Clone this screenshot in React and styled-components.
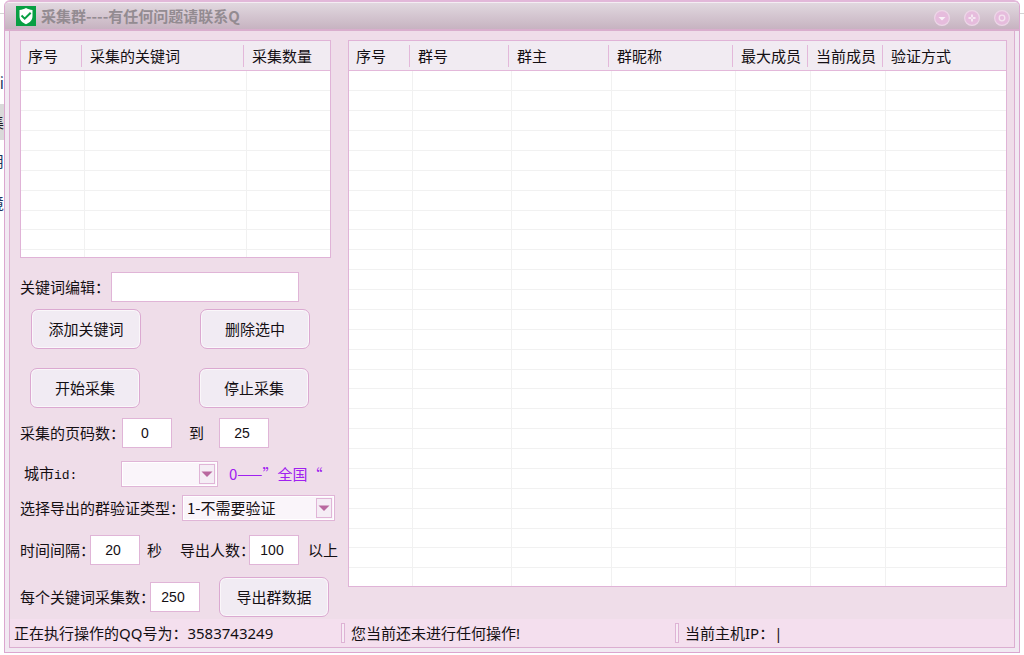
import React from 'react'
import styled, { createGlobalStyle } from 'styled-components'

const GlobalStyle = createGlobalStyle`
  * {
    box-sizing: border-box;
  }
  body {
    margin: 0;
    background: white;
    color: #140f13;
    font-family: "Noto Sans CJK SC", "Liberation Sans", sans-serif;
    font-size: 15px;
    line-height: 20px;
  }
  button, input, select {
    font-family: inherit;
    font-size: inherit;
    line-height: inherit;
    color: inherit;
    margin: 0;
  }
`;

const Page = styled.div`
  display: flex;
  align-items: flex-start;
  padding-right: 4px;
  background: linear-gradient(#d4d4d4, #d4d4d4) 0 13px / 100% 1px no-repeat;
`;

const Backdrop = styled.ul`
  width: 4px;
  margin: 0;
  padding: 62px 0 0;
  overflow: hidden;
  list-style: none;
`;
const BackdropItem = styled.li`
  display: flex;
  align-items: center;
  justify-content: flex-end;
  height: 42px;
  white-space: nowrap;
  color: #1b3560;
`;
const BackdropCurrent = styled(BackdropItem)`
  height: 36px;
  background: #d9d9d9;
  color: #1c161b;
`;

const Window = styled.main`
  flex: 1;
  min-width: 0;
  border: 1px solid #dba6cf;
  border-top: 2px solid #e2b8d9;
  border-radius: 6px 6px 0 0;
  background: #f1e9f2;
  overflow: hidden;
`;
const TitleBar = styled.header`
  display: flex;
  align-items: center;
  height: 29px;
  padding: 0 9px 0 11px;
  border-top: 1px solid #f4edf3;
  border-bottom: 2px solid #d9aecd;
  background: linear-gradient(#e1d8df, #c7b3c1);
`;
const Title = styled.h1`
  flex: 1;
  margin: 0 0 0 5px;
  font-size: 15px;
  font-weight: 700;
  color: #938b91;
`;
const TitleButtons = styled.div`
  display: flex;
  gap: 14px;
  padding-top: 4px;
`;
const TitleButton = styled.button`
  width: 16px;
  height: 16px;
  padding: 0;
  border: 0;
  background: none;

  svg {
    display: block;
  }
`;

const Frame = styled.div`
  margin: 0 4px 4px;
  border: 1px solid #dcaed1;
  border-top: 0;
  background: #efdde9;
`;
const Content = styled.div`
  display: flex;
  gap: 4px;
  padding: 9px 7px 2px 10px;
`;
const LeftColumn = styled.div`
  width: 324px;
  flex-shrink: 0;
`;
const RightColumn = styled.div`
  flex: 1;
  min-width: 0;
`;
const KeywordArea = styled.div`
  width: 311px;
`;

const ListBox = styled.div`
  height: ${props => props.$height};
  border: 1px solid #e0b3d7;
  background: white;
  overflow: hidden;
`;
const List = styled.table`
  width: 100%;
  table-layout: fixed;
  border-collapse: separate;
  border-spacing: 0;
`;
const HeadCell = styled.th`
  width: ${props => props.$width || 'auto'};
  height: 30px;
  padding: 0 0 0 5px;
  border-bottom: 1px solid #e3b8da;
  background: #f1ebf2 linear-gradient(#e3b8da, #e3b8da) right 3px center / 1px 22px no-repeat;
  font-weight: 400;
  text-align: left;
  white-space: nowrap;

  &:first-child {
    padding-left: 7px;
  }
  &:last-child {
    background-image: none;
  }
`;
const BodyRow = styled.tr`
  height: 20px;

  &:nth-child(8n) {
    height: 19px;
  }
`;
const BodyCell = styled.td`
  padding: 0;
  border-right: 1px solid #f1f1f1;
  border-bottom: 1px solid #f1f1f1;

  &:last-child {
    border-right: 0;
  }
`;

const FormRow = styled.div`
  display: flex;
  align-items: center;
  margin-top: ${props => props.$top || '10px'};
  white-space: nowrap;
`;
const ButtonRow = styled(FormRow)`
  gap: 59px;
  padding-left: ${props => props.$indent};
`;
const Label = styled.label`
  width: ${props => props.$width || 'auto'};
  margin-left: ${props => props.$left || '0'};
  flex-shrink: 0;
`;
const Mono = styled.span`
  font-family: "Liberation Mono", monospace;
  font-size: 13px;
`;
const Note = styled.span`
  margin-left: 11px;
  color: #a020f0;
`;
const TextInput = styled.input`
  width: 188px;
  height: 30px;
  padding: 0 6px;
  border: 1px solid #e0b5d7;
  border-radius: 0;
  background: white;
`;
const NumberInput = styled(TextInput)`
  width: 50px;
  padding: 0 4px 0 0;
  font-family: "Liberation Sans", sans-serif;
  font-size: 14px;
  text-align: center;
`;
const Button = styled.button`
  width: 110px;
  height: 40px;
  padding: 0;
  border: 1px solid #dba9d1;
  border-radius: 7px;
  background: #f1ebf3;
  box-shadow: inset 0 0 0 1px #faf7fa;
`;
const ExportButton = styled(Button)`
  margin-left: 19px;
`;

const SelectBox = styled.div`
  display: grid;
  width: ${props => props.$width};
  height: 26px;
  align-items: center;
`;
const SelectField = styled.select`
  grid-area: 1 / 1;
  width: 100%;
  height: 100%;
  padding: 0 20px 0 4px;
  border: 1px solid #e0b5d7;
  border-radius: 0;
  appearance: none;
  background: #faf5fa;
  box-shadow: inset 0 0 0 1px white;
`;
const SelectArrow = styled.span`
  grid-area: 1 / 1;
  justify-self: end;
  display: flex;
  align-items: center;
  justify-content: center;
  width: 16px;
  height: 20px;
  margin-right: 3px;
  border: 1px solid #e0b5d7;
  background: #f5edf5;
  pointer-events: none;
`;

const StatusBar = styled.footer`
  display: flex;
  align-items: center;
  height: 28px;
  background: #f4dfee;
  font-family: "Noto Sans", "Noto Sans CJK SC", sans-serif;
`;
const StatusText = styled.span`
  width: ${props => props.$width || 'auto'};
  padding-left: ${props => props.$left || '6px'};
  white-space: nowrap;
`;
const StatusDivider = styled.span`
  width: 4px;
  height: 20px;
  border: 1px solid #deb3d5;
  background: #f7ecf5;
`;

const keywordColumns = [
  { name: '序号', width: '64px' },
  { name: '采集的关键词', width: '162px' },
  { name: '采集数量' },
]

const groupColumns = [
  { name: '序号', width: '64px' },
  { name: '群号', width: '99px' },
  { name: '群主', width: '100px' },
  { name: '群昵称', width: '124px' },
  { name: '最大成员', width: '75px' },
  { name: '当前成员', width: '75px' },
  { name: '验证方式' },
]

const DataList = ({ columns, rows, height }) => (
  <ListBox $height={height}>
    <List>
      <thead>
        <tr>
          {columns.map(column => (
            <HeadCell key={column.name} $width={column.width}>{column.name}</HeadCell>
          ))}
        </tr>
      </thead>
      <tbody>
        {Array.from({ length: rows }, (_, row) => (
          <BodyRow key={row}>
            {columns.map(column => <BodyCell key={column.name} />)}
          </BodyRow>
        ))}
      </tbody>
    </List>
  </ListBox>
)

const Select = ({ id, width, children }) => (
  <SelectBox $width={width}>
    <SelectField id={id}>{children}</SelectField>
    <SelectArrow>
      <svg width="12" height="6" viewBox="0 0 12 6">
        <path d="M0.5 0.5h11L6 6z" fill="#b9689f" />
      </svg>
    </SelectArrow>
  </SelectBox>
)

const ShieldIcon = () => (
  <svg width="20" height="20" viewBox="0 0 20 20">
    <rect width="20" height="20" fill="#089f43" />
    <path d="M10 2c2 1.200 4 1.800 6.500 2v6c0 4-2.500 6.500-6.500 8.200C6 16.500 3.500 14 3.500 10V4C6 3.800 8 3.200 10 2z" fill="white" />
    <path d="M5.500 9.500l3.200 3.200 6-6" fill="none" stroke="#089f43" strokeWidth="2" />
  </svg>
)

const RoundIcon = ({ children }) => (
  <svg width="16" height="16" viewBox="0 0 16 16">
    <circle cx="8" cy="8" r="7.400" fill="#e6bcdd" stroke="#ecd6e7" strokeWidth="1.200" />
    {children}
  </svg>
)

const App = () => (
  <>
    <GlobalStyle />
    <Page>
      <Backdrop aria-hidden="true">
        <BackdropItem>i</BackdropItem>
        <BackdropCurrent>集</BackdropCurrent>
        <BackdropItem>用</BackdropItem>
        <BackdropItem>境</BackdropItem>
      </Backdrop>
      <Window>
        <TitleBar>
          <ShieldIcon />
          <Title>采集群----有任何问题请联系Q</Title>
          <TitleButtons>
            <TitleButton aria-label="最小化">
              <RoundIcon>
                <path d="M4.500 7h7L8 10.500z" fill="#f8eff6" />
              </RoundIcon>
            </TitleButton>
            <TitleButton aria-label="最大化">
              <RoundIcon>
                <path d="M8 4.500v7M4.500 8h7" stroke="#f4e6f1" strokeWidth="2" />
                <circle cx="8" cy="8" r="0.800" fill="#e0b3d7" />
              </RoundIcon>
            </TitleButton>
            <TitleButton aria-label="关闭">
              <RoundIcon>
                <circle cx="8" cy="8" r="2.800" fill="none" stroke="#f3e3ef" strokeWidth="1.300" />
              </RoundIcon>
            </TitleButton>
          </TitleButtons>
        </TitleBar>
        <Frame>
          <Content>
            <LeftColumn>
              <KeywordArea>
                <DataList columns={keywordColumns} rows={10} height="218px" />
              </KeywordArea>
              <FormRow $top="14px">
                <Label htmlFor="keyword" $width="91px">关键词编辑：</Label>
                <TextInput id="keyword" />
              </FormRow>
              <ButtonRow $top="7px" $indent="11px">
                <Button>添加关键词</Button>
                <Button>删除选中</Button>
              </ButtonRow>
              <ButtonRow $top="19px" $indent="10px">
                <Button>开始采集</Button>
                <Button>停止采集</Button>
              </ButtonRow>
              <FormRow>
                <Label htmlFor="page-from" $width="102px">采集的页码数：</Label>
                <NumberInput id="page-from" defaultValue="0" />
                <Label htmlFor="page-to" $width="30px" $left="17px">到</Label>
                <NumberInput id="page-to" defaultValue="25" />
              </FormRow>
              <FormRow $top="13px">
                <Label htmlFor="city" $width="97px" $left="4px">城市<Mono>id:</Mono></Label>
                <Select id="city" width="97px">
                  <option></option>
                </Select>
                <Note>0——”全国“</Note>
              </FormRow>
              <FormRow $top="8px">
                <Label htmlFor="verify" $width="162px">选择导出的群验证类型：</Label>
                <Select id="verify" width="153px">
                  <option>1-不需要验证</option>
                </Select>
              </FormRow>
              <FormRow $top="14px">
                <Label htmlFor="interval" $width="70px">时间间隔：</Label>
                <NumberInput id="interval" defaultValue="20" />
                <Label htmlFor="interval" $width="26px" $left="7px">秒</Label>
                <Label htmlFor="people" $width="69px" $left="7px">导出人数：</Label>
                <NumberInput id="people" defaultValue="100" />
                <Label htmlFor="people" $left="9px">以上</Label>
              </FormRow>
              <FormRow $top="12px">
                <Label htmlFor="per-keyword" $width="130px">每个关键词采集数：</Label>
                <NumberInput id="per-keyword" defaultValue="250" />
                <ExportButton>导出群数据</ExportButton>
              </FormRow>
            </LeftColumn>
            <RightColumn>
              <DataList columns={groupColumns} rows={26} height="547px" />
            </RightColumn>
          </Content>
          <StatusBar>
            <StatusText $width="331px" $left="4px">正在执行操作的QQ号为：3583743249</StatusText>
            <StatusDivider />
            <StatusText $width="330px">您当前还未进行任何操作!</StatusText>
            <StatusDivider />
            <StatusText>当前主机IP：|</StatusText>
          </StatusBar>
        </Frame>
      </Window>
    </Page>
  </>
)

export default App
